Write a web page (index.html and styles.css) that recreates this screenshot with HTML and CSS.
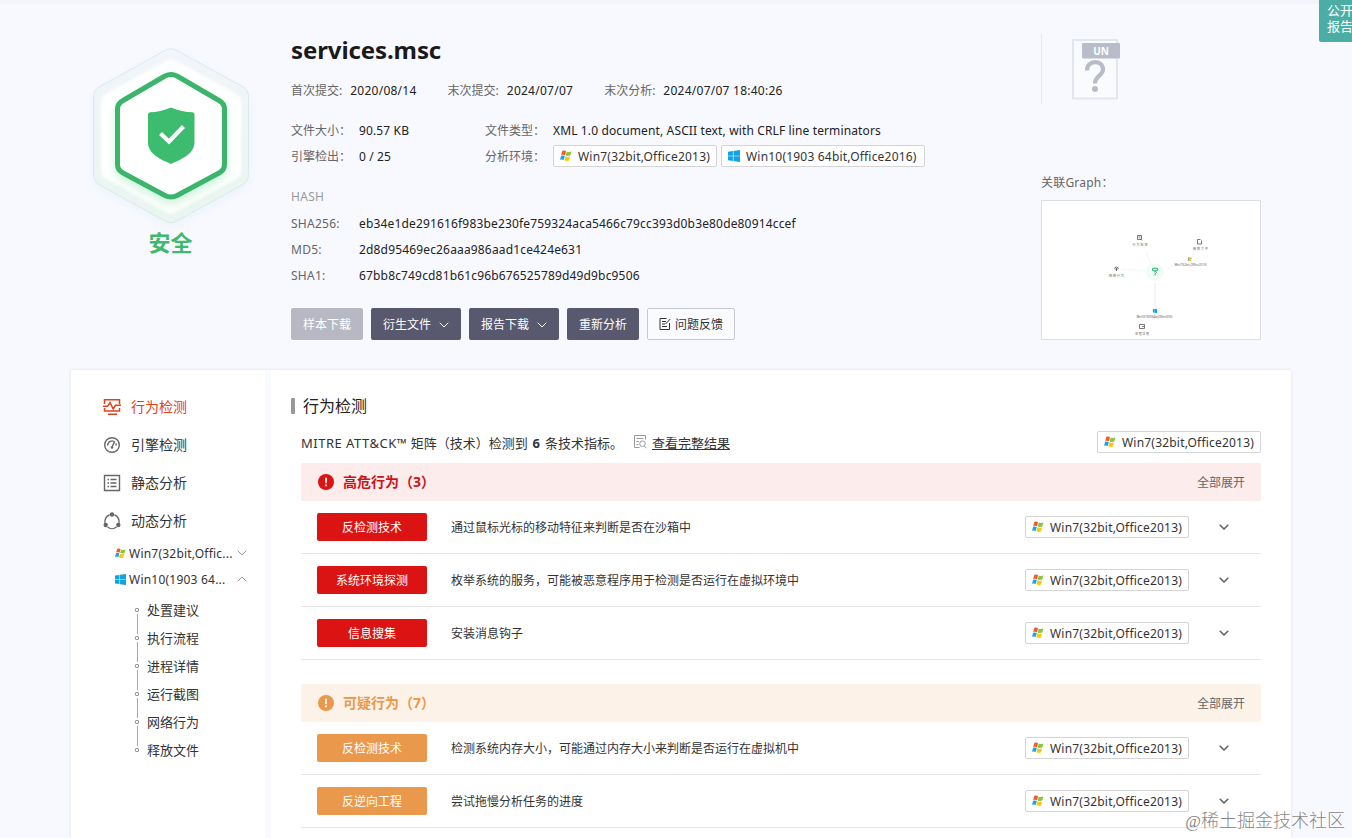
FILE: index.html
```html
<!DOCTYPE html>
<html lang="zh-CN">
<head>
    <meta charset="UTF-8">
    <meta name="viewport" content="width=device-width, initial-scale=1.0">
    <title>services.msc</title>
    <link rel="stylesheet" href="styles.css">
</head>
<body>
    <svg class="sprite" width="0" height="0">
        <symbol id="win7" viewBox="0 0 12 12">
            <path fill="#f0592b" d="M2.3 1.1C3.6.4 4.8.5 6 1.2L5 5.2C3.8 4.5 2.6 4.5 1.2 5.1z"/>
            <path fill="#8cc63f" d="M6.7 1.5c1.3.7 2.8.8 4.7.1l-1.1 4c-1.6.6-3 .6-4.6-.1z"/>
            <path fill="#1aa5e8" d="M1 5.9c1.4-.6 2.6-.6 3.8.1l-1.1 4C2.500 9.300 1.300 9.300 0 9.900z"/>
            <path fill="#fdc60b" d="M5.500 6.300c1.500.700 2.900.800 4.600.1L9 10.500c-1.600.7-3.100.6-4.600-.2z"/>
        </symbol>
        <symbol id="win10" viewBox="0 0 12 12">
            <path fill="#0ea2e6" d="M0 1.700l4.900-.7v4.700H0zM5.500.9L12 0v5.700H5.500zM0 6.300h4.900V11L0 10.300zM5.500 6.300H12V12l-6.500-.9z"/>
        </symbol>
        <symbol id="down" viewBox="0 0 10 6">
            <path fill="none" stroke="currentColor" d="M.7.7L5 5 9.300.7"/>
        </symbol>
        <symbol id="alert" viewBox="0 0 16 16">
            <circle cx="8" cy="8" r="8" fill="currentColor"/>
            <path fill="#fff" d="M7 3.800h2l-.3 5.400H7.300zM7.100 10.400h1.800v1.800H7.100z"/>
        </symbol>
    </svg>

    <div class="public-tag">公开<br>报告</div>

    <header class="hero">
        <div class="verdict">
            <svg class="verdict-icon" width="190" height="190" viewBox="0 0 190 190">
                <defs>
                    <linearGradient id="ring" x1="0" y1="0" x2="0" y2="1">
                        <stop offset="0" stop-color="#f2f5fa"/>
                        <stop offset="1" stop-color="#e9f5f0"/>
                    </linearGradient>
                    <filter id="glow" x="-20%" y="-20%" width="140%" height="150%">
                        <feDropShadow dx="0" dy="5" stdDeviation="5" flood-color="#5fdc8f" flood-opacity=".3"/>
                    </filter>
                    <filter id="soft" x="-20%" y="-20%" width="140%" height="140%">
                        <feDropShadow dx="0" dy="3" stdDeviation="5" flood-color="#cfeaf0" flood-opacity=".4"/>
                    </filter>
                    <filter id="edge">
                        <feGaussianBlur stdDeviation="1.5"/>
                    </filter>
                </defs>
                <path filter="url(#soft)" fill="url(#ring)" stroke="#d3e4e5" stroke-width=".7" d="M89 9.500Q95 6 101 9.500L167 46Q172.500 49 172.500 56V133Q172.500 140 167 143.500L101 180Q95 183.500 89 180L23 143.500Q17.500 140 17.500 133V56Q17.500 49 23 46z"/>
                <path filter="url(#edge)" fill="#fff" d="M90 20Q95 17 100 20L160 53Q165 56 165 61V130Q165 135 160 138L100 171Q95 174 90 171L30 138Q25 135 25 130V61Q25 56 30 53z"/>
                <path filter="url(#glow)" fill="#fff" stroke="#3bb56c" stroke-width="5" stroke-linejoin="round" d="M89 35Q95 32 101 35L143 59.500Q148.500 62.500 148.500 68V123.500Q148.500 129 143 132L101 154.500Q95 157.500 89 154.500L47 132Q41.500 129 41.500 123.500V68Q41.500 62.500 47 59.500z"/>
                <path fill="#3dbb6e" d="M95 66.500Q106 71 116.500 71.300Q118.500 71.500 118.500 73.500V101C118.500 113 106 118 95 123C84 118 72 113 72 101V73.500Q72 71.500 74 71.300Q84 71 95 66.500z"/>
                <path fill="none" stroke="#fff" stroke-width="4.200" d="M84.500 92.500l8.500 8 14.500-15"/>
            </svg>
            <div class="verdict-text">安全</div>
        </div>

        <div class="summary">
            <h1>services.msc</h1>
            <div class="dates">
                <span><label>首次提交:</label>2020/08/14</span>
                <span><label>末次提交:</label>2024/07/07</span>
                <span><label>末次分析:</label>2024/07/07 18:40:26</span>
            </div>
            <div class="facts">
                <label>文件大小：</label><span>90.57 KB</span>
                <label>文件类型：</label><span class="file-type">XML 1.0 document, ASCII text, with CRLF line terminators</span>
                <label>引擎检出：</label><span>0 / 25</span>
                <label>分析环境：</label>
                <span class="envs">
                    <span class="env"><svg><use href="#win7"/></svg><b>Win7(32bit,Office2013)</b></span>
                    <span class="env env-10"><svg><use href="#win10"/></svg><b>Win10(1903 64bit,Office2016)</b></span>
                </span>
            </div>
            <div class="hash-title">HASH</div>
            <div class="hashes">
                <label>SHA256:</label><span>eb34e1de291616f983be230fe759324aca5466c79cc393d0b3e80de80914ccef</span>
                <label>MD5:</label><span>2d8d95469ec26aaa986aad1ce424e631</span>
                <label>SHA1:</label><span>67bb8c749cd81b61c96b676525789d49d9bc9506</span>
            </div>
            <div class="actions">
                <button class="btn btn-disabled">样本下载</button>
                <button class="btn btn-menu">衍生文件<svg><use href="#down"/></svg></button>
                <button class="btn btn-menu">报告下载<svg><use href="#down"/></svg></button>
                <button class="btn">重新分析</button>
                <button class="btn btn-plain">
                    <svg viewBox="0 0 12 12" fill="none" stroke="currentColor"><path d="M7.500.5H1v11h9.500V5M3 3.500h4M3 6h3M3 8.500h5M11.300 1L6.500 6"/></svg>问题反馈
                </button>
            </div>
        </div>

        <div class="related">
            <div class="file-kind">
                <svg width="50" height="62" viewBox="0 0 50 62">
                    <rect x="2" y="2" width="44" height="58.500" fill="#f9fbff" stroke="#e3e6ee" stroke-width="2"/>
                    <rect x="11" y="5" width="38" height="15.500" rx="1" fill="#b9bdca"/>
                    <text x="30" y="16.500" text-anchor="middle" class="kind-name">UN</text>
                    <path fill="none" stroke="#b9bcc8" stroke-width="4.200" d="M16 32.500C16 21.500 32 21.500 32 31.500C32 37.500 24 38 24 45.500"/>
                    <circle cx="24" cy="51" r="3" fill="#b9bcc8"/>
                </svg>
            </div>
            <div class="graph-title">关联Graph：</div>
            <svg class="graph" viewBox="0 0 218 138">
                <g stroke="#eef2f0" stroke-width=".7">
                    <path d="M104 52l5 10M79 68l24 2M125 68l20-9M150 54l6-9"/>
                    <path stroke="#dfe6e2" d="M113 82v25"/>
                </g>
                <circle cx="113" cy="71" r="8" fill="#f3fcf6" stroke="#e2f5e8" stroke-width=".6"/>
                <path d="M110.500 67.300h5v2h-5zM112 71l2-.5.500 1-1.500 1.500v1.500" fill="none" stroke="#2bb573" stroke-width="1"/>
                <g fill="none" stroke="#555" stroke-width=".8">
                    <path d="M95.500 34.500h4v4h-4zM96.500 36h2M98 37.500l2 2"/>
                    <path d="M159.500 39.500v3.500h-4v-4.500h3"/>
                    <path d="M97.500 123.500h5v4h-5zM100 125.500h2"/>
                    <path d="M72.500 67l2-1 2 1-2 2zM74.500 67v3"/>
                </g>
                <svg x="145.500" y="56" width="4.500" height="4.500"><use href="#win7"/></svg>
                <svg x="110.500" y="107.500" width="4.500" height="4.500"><use href="#win10"/></svg>
                <g class="node-name">
                    <text x="90.500" y="44.500" textLength="15">行为检测</text>
                    <text x="151" y="49" textLength="15">释放文件</text>
                    <text x="132.500" y="65" textLength="32">Win7(32bit,Office2013)</text>
                    <text x="67" y="75.500" textLength="15">网络行为</text>
                    <text x="94.500" y="116.500" textLength="36">Win10(1903 64bit,Office2016)</text>
                    <text x="93" y="133.500" textLength="14">进程详情</text>
                </g>
            </svg>
        </div>
    </header>

    <div class="report">
        <nav class="sidebar">
            <a class="nav-item active">
                <svg viewBox="0 0 18 18" fill="none" stroke="currentColor" stroke-width="1.500"><path d="M1.500 6V1.800h15V6M1.500 10v3h15v-3M0 8.300h4.500L7 4.500l3.200 6.500 2.300-3.700H18M5 16.200h9"/></svg>行为检测
            </a>
            <a class="nav-item">
                <svg viewBox="0 0 18 18" fill="none" stroke="currentColor" stroke-width="1.400"><circle cx="9" cy="9" r="7.300"/><path d="M4.700 9.500a4.300 4.300 0 0 1 7.300-3.300M12.700 7.300a4.300 4.300 0 0 1 .6 2.200M11.500 5.800l-2.300 5"/><circle cx="9" cy="11.500" r="1.300" fill="currentColor" stroke="none"/></svg>引擎检测
            </a>
            <a class="nav-item">
                <svg viewBox="0 0 18 18" fill="none" stroke="currentColor" stroke-width="1.400"><path d="M1.500 1.500h15v15h-15zM4.500 5.500h1.500M7.500 5.500h6M4.500 9h1.500M7.500 9h6M4.500 12.500h1.500M7.500 12.500h6"/></svg>静态分析
            </a>
            <a class="nav-item">
                <svg viewBox="0 0 18 18" fill="none" stroke="currentColor" stroke-width="1.400"><path d="M6.500 3A7 7 0 0 0 2 11M11.500 3A7 7 0 0 1 16 11M4.500 15a7 7 0 0 0 9 0"/><g fill="currentColor" stroke="none"><circle cx="9" cy="2.500" r="2.200"/><circle cx="2.700" cy="13" r="2.200"/><circle cx="15.300" cy="13" r="2.200"/></g></svg>动态分析
            </a>
            <div class="nav-env"><svg class="os"><use href="#win7"/></svg><span>Win7(32bit,Offic...</span><svg class="arrow"><use href="#down"/></svg></div>
            <div class="nav-env open"><svg class="os"><use href="#win10"/></svg><span>Win10(1903 64...</span><svg class="arrow"><use href="#down"/></svg></div>
            <ul class="steps">
                <li>处置建议</li>
                <li>执行流程</li>
                <li>进程详情</li>
                <li>运行截图</li>
                <li>网络行为</li>
                <li>释放文件</li>
            </ul>
        </nav>

        <main class="content">
            <h2>行为检测</h2>
            <div class="mitre">
                <span class="mitre-text"><span class="mitre-name">MITRE ATT&amp;CK™</span> 矩阵（技术）检测到 <strong>6</strong> 条技术指标。</span>
                <svg class="view-icon" viewBox="0 0 13 14" fill="none" stroke="#999"><path d="M5.500 12.500H.5V.5h11v4M2.500 3.500h7M2.500 6.500h2.500M2.500 9.500h2M10.300 11l2.200 2.300"/><circle cx="8.500" cy="8.700" r="2.800"/></svg>
                <a class="view-all">查看完整结果</a>
                <span class="env"><svg><use href="#win7"/></svg><b>Win7(32bit,Office2013)</b></span>
            </div>

            <section class="risk high">
                <div class="risk-head">
                    <svg><use href="#alert"/></svg>
                    <strong>高危行为（3）</strong>
                    <a>全部展开</a>
                </div>
                <div class="risk-row">
                    <span class="kind">反检测技术</span>
                    <span class="desc">通过鼠标光标的移动特征来判断是否在沙箱中</span>
                    <span class="env"><svg><use href="#win7"/></svg><b>Win7(32bit,Office2013)</b></span>
                    <svg class="toggle"><use href="#down"/></svg>
                </div>
                <div class="risk-row">
                    <span class="kind">系统环境探测</span>
                    <span class="desc">枚举系统的服务，可能被恶意程序用于检测是否运行在虚拟环境中</span>
                    <span class="env"><svg><use href="#win7"/></svg><b>Win7(32bit,Office2013)</b></span>
                    <svg class="toggle"><use href="#down"/></svg>
                </div>
                <div class="risk-row">
                    <span class="kind">信息搜集</span>
                    <span class="desc">安装消息钩子</span>
                    <span class="env"><svg><use href="#win7"/></svg><b>Win7(32bit,Office2013)</b></span>
                    <svg class="toggle"><use href="#down"/></svg>
                </div>
            </section>

            <section class="risk suspicious">
                <div class="risk-head">
                    <svg><use href="#alert"/></svg>
                    <strong>可疑行为（7）</strong>
                    <a>全部展开</a>
                </div>
                <div class="risk-row">
                    <span class="kind">反检测技术</span>
                    <span class="desc">检测系统内存大小，可能通过内存大小来判断是否运行在虚拟机中</span>
                    <span class="env"><svg><use href="#win7"/></svg><b>Win7(32bit,Office2013)</b></span>
                    <svg class="toggle"><use href="#down"/></svg>
                </div>
                <div class="risk-row">
                    <span class="kind">反逆向工程</span>
                    <span class="desc">尝试拖慢分析任务的进度</span>
                    <span class="env"><svg><use href="#win7"/></svg><b>Win7(32bit,Office2013)</b></span>
                    <svg class="toggle"><use href="#down"/></svg>
                </div>
            </section>
        </main>
    </div>

    <div class="watermark"><span>@</span>稀土掘金技术社区</div>
</body>
</html>
```
FILE: styles.css
```css
*, *::before, *::after {
    box-sizing: border-box;
}
body {
    margin: 0;
    height: 838px;
    overflow: hidden;
    position: relative;
    background-color: #f8f9ff;
    color: #222;
    font: 12px/20px "Noto Sans", "Noto Sans CJK SC", sans-serif;
}
.sprite {
    position: absolute;
}
h1, h2, ul {
    margin: 0;
    padding: 0;
}
label {
    color: #666;
    letter-spacing: 0;
}
svg {
    flex: none;
}
.public-tag {
    position: absolute;
    top: 0;
    right: 0;
    width: 33px;
    height: 42px;
    padding: 2px 0 0 8px;
    overflow: hidden;
    border-radius: 0 0 0 2px;
    background-color: #4cada5;
    color: #fff;
    font-size: 13px;
    line-height: 16px;
    white-space: nowrap;
}

/* header */
.hero {
    display: flex;
    height: 370px;
    padding: 0 91px 0 71px;
    border-top: 4px solid #f4f5fb;
}
.verdict {
    width: 220px;
    padding: 37px 20px 0 0;
    text-align: center;
}
.verdict-icon {
    display: block;
    margin-left: 5px;
}
.verdict-text {
    height: 30px;
    margin-top: -4px;
    padding-right: 1px;
    color: #3fb870;
    font-size: 22px;
    font-weight: bold;
    line-height: 30px;
}
.summary {
    flex: 1;
    padding-top: 30px;
}
h1 {
    color: #1a1a1a;
    font-size: 24px;
    line-height: 32px;
    letter-spacing: -0.1px;
}
.dates {
    display: flex;
    gap: 31px;
    margin-top: 15px;
    letter-spacing: 0.25px;
}
.dates label {
    margin-right: 8px;
}
.facts {
    display: grid;
    grid-template-columns: 68px 126px 68px auto;
    justify-content: start;
    line-height: 26px;
    margin-top: 17px;
    white-space: nowrap;
    letter-spacing: 0.13px;
}
.envs {
    display: flex;
    align-items: center;
    gap: 4px;
    margin-bottom: 2px;
}
.env {
    display: flex;
    align-items: center;
    width: 164px;
    height: 22px;
    padding-left: 6px;
    border: 1px solid #d5d5d5;
    border-radius: 2px;
    background-color: #fff;
    color: #333;
    line-height: 20px;
    letter-spacing: 0.2px;
    white-space: nowrap;
}
.env b {
    padding-top: 2px;
    font-weight: normal;
}
.env svg {
    width: 12px;
    height: 12px;
    margin-right: 6px;
}
.env-10 {
    width: 204px;
}
.hash-title {
    color: #999;
    margin-top: 17px;
    letter-spacing: 0.3px;
}
.hashes {
    display: grid;
    grid-template-columns: 68px auto;
    line-height: 26px;
    margin-top: 4px;
    letter-spacing: 0.16px;
}
.hashes label {
    letter-spacing: 0.25px;
}
.actions {
    display: flex;
    gap: 8px;
    margin-top: 19px;
}
.btn {
    display: flex;
    align-items: center;
    justify-content: center;
    width: 72px;
    height: 32px;
    padding: 2px 0 0;
    border: 0;
    border-radius: 2px;
    background-color: #58586e;
    color: #fff;
    font: inherit;
    white-space: nowrap;
}
.btn-disabled {
    background-color: #b8b8c5;
}
.btn-menu {
    width: 90px;
    gap: 8px;
}
.btn-menu svg {
    width: 10px;
    height: 6px;
}
.btn-plain {
    width: 88px;
    gap: 4px;
    border: 1px solid #c6c8d4;
    background-color: #fafbff;
    color: #333;
}
.btn-plain svg {
    width: 12px;
    height: 12px;
    margin-bottom: 2px;
}
.related {
    width: 220px;
    padding-top: 30px;
}
.file-kind {
    height: 70px;
    padding: 4px 0 0 29px;
    border-left: 1px solid #e6e9f1;
}
.kind-name {
    fill: #fff;
    font-size: 10px;
    font-weight: bold;
}
.graph-title {
    color: #666;
    margin-top: 69px;
    letter-spacing: 0.2px;
}
.graph {
    display: block;
    width: 220px;
    height: 140px;
    margin-top: 7px;
    border: 1px solid #dcdfe3;
    background-color: #fff;
}
.node-name {
    fill: #666;
    font-size: 3px;
}

/* report card */
.report {
    display: flex;
    width: 1220px;
    height: 468px;
    margin-left: 71px;
    background-color: #fff;
    box-shadow: 0 0 3px rgba(60,70,110,0.14);
}
.sidebar {
    width: 200px;
    padding: 18px 0 0 32px;
    border-right: 6px solid #fafbff;
}
.nav-item {
    display: flex;
    align-items: center;
    gap: 10px;
    height: 38px;
    color: #333;
    font-size: 14px;
}
.nav-item svg {
    width: 18px;
    height: 18px;
    color: #666;
}
.nav-item.active,
.nav-item.active svg {
    color: #e2401c;
}
.nav-env {
    display: flex;
    align-items: center;
    height: 26px;
    padding-left: 12px;
    color: #333;
}
.nav-env span {
    width: 108px;
    margin-left: 3px;
    padding-top: 2px;
    white-space: nowrap;
    letter-spacing: 0.22px;
}
.nav-env .os {
    width: 11px;
    height: 11px;
}
.nav-env .arrow {
    width: 10px;
    height: 6px;
    color: #999;
}
.nav-env.open .arrow {
    transform: rotate(180deg);
}
.steps {
    list-style: none;
    padding: 4px 0 0 32px;
}
.steps li {
    display: flex;
    align-items: center;
    gap: 8px;
    position: relative;
    height: 28px;
    padding-bottom: 1px;
    color: #333;
    font-size: 13px;
}
.steps li::before {
    content: "";
    width: 4px;
    height: 4px;
    border: 1px solid #999;
    border-radius: 1px;
}
.steps li + li::after {
    content: "";
    position: absolute;
    left: 2px;
    top: -10px;
    width: 1px;
    height: 20px;
    background-color: #aaa;
}
.content {
    flex: 1;
    padding: 23px 30px 0;
}
h2 {
    display: flex;
    align-items: center;
    gap: 8px;
    height: 26px;
    margin-left: -10px;
    color: #222;
    font-size: 16px;
    font-weight: normal;
}
h2::before {
    content: "";
    width: 4px;
    height: 16px;
    border-radius: 1px;
    background-color: #999;
}
.mitre {
    display: flex;
    align-items: center;
    height: 22px;
    margin: 12px 0 10px;
    color: #333;
    font-size: 13px;
    white-space: nowrap;
}
.mitre-text,
.view-all {
    padding-top: 2px;
}
.mitre-name {
    letter-spacing: 0.5px;
}
.mitre strong {
    margin: 0 1.5px;
}
.mitre .env {
    margin-left: auto;
    font-size: 12px;
}
.view-icon {
    width: 13px;
    height: 14px;
    margin: 0 5px 0 11px;
}
.view-all {
    text-decoration: underline;
}
.risk {
    margin-bottom: 24px;
}
.risk-head {
    display: flex;
    align-items: center;
    height: 38px;
    padding: 0 16px 0 17px;
    border-radius: 2px;
    font-size: 14px;
}
.risk-head svg {
    width: 16px;
    height: 16px;
    margin-right: 9px;
}
.risk-head a {
    margin-left: auto;
    padding-top: 2px;
    color: #666;
    font-size: 12px;
}
.risk-row {
    display: flex;
    align-items: center;
    height: 53px;
    padding-left: 16px;
    border-bottom: 1px solid #e6e6e6;
}
.kind {
    width: 110px;
    height: 28px;
    border-radius: 2px;
    color: #fff;
    line-height: 30px;
    text-align: center;
}
.desc {
    flex: 1;
    margin-left: 24px;
    padding-top: 2px;
    color: #333;
}
.toggle {
    width: 10px;
    height: 6px;
    margin: 0 32px 0 30px;
    color: #666;
    stroke-width: 1.6;
}
.high .risk-head {
    background-color: #fdecec;
    color: #db1313;
}
.high .kind {
    background-color: #db1313;
}
.high .risk-head strong {
    color: #c8161d;
}
.suspicious .risk-head {
    background-color: #fdf2e8;
    color: #ea994c;
}
.suspicious .kind {
    background-color: #ea994c;
}
.watermark {
    position: absolute;
    right: 7px;
    bottom: 3px;
    color: rgba(90,90,90,0.75);
    font-family: "Noto Sans CJK SC", sans-serif;
    font-size: 18px;
    font-weight: 300;
    line-height: 26px;
    white-space: nowrap;
}
.watermark span {
    font-family: "Liberation Serif", serif;
    font-size: 17px;
}
```
